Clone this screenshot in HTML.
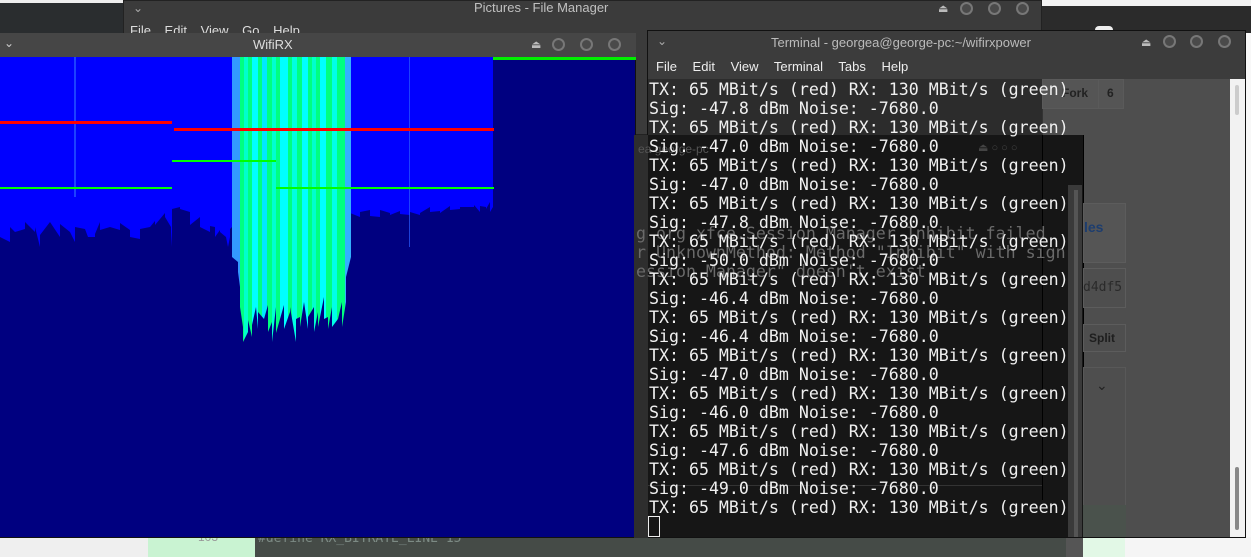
<!DOCTYPE html>
<html><head><meta charset="utf-8"><style>
*{margin:0;padding:0;box-sizing:border-box}
body{width:1251px;height:557px;overflow:hidden;position:relative;background:#f5f5f5;font-family:"Liberation Sans",sans-serif}
.a{position:absolute}
.mono{font-family:"DejaVu Sans Mono","Liberation Mono",monospace}
.btn{position:absolute;width:13px;height:13px;border-radius:50%;border:2px solid #777;background:#4a4a4a}
.ej{position:absolute;color:#bbb;font-size:11px}
</style></head><body>
<div class="a" style="left:0;top:0;width:123px;height:33px;background:#2a2d2f"></div>
<div class="a" style="left:0;top:0;width:123px;height:3px;background:#eee"></div>
<div class="a" style="left:1042px;top:0;width:209px;height:33px;background:#2b2b2b"></div>
<div class="a" style="left:1042px;top:0;width:209px;height:6px;background:#f2f2f2"></div>
<div class="a" style="left:1095px;top:26px;width:18px;height:8px;background:#eee;border-radius:4px 4px 0 0"></div>
<div class="a" style="left:123px;top:0;width:919px;height:135px;background:#3b3b3b;border:1px solid #222"></div>
<div class="a" style="left:133px;top:1px;color:#aaa;font-size:12px">⌄</div>
<div class="a" style="left:474px;top:0;color:#c0c0c0;font-size:13px">Pictures - File Manager</div>
<div class="a" style="left:130px;top:23px;color:#ddd;font-size:13px;word-spacing:10px">File Edit View Go Help</div>
<div class="ej" style="left:938px;top:2px">⏏</div>
<div class="btn" style="left:960px;top:2px"></div><div class="btn" style="left:988px;top:2px"></div><div class="btn" style="left:1016px;top:2px"></div>
<div class="a" style="left:0;top:537px;width:148px;height:20px;background:#efefef"></div>
<div class="a" style="left:148px;top:537px;width:107px;height:20px;background:#c9f3d2"></div>
<div class="a" style="left:198px;top:530px;color:#999;font-size:12px">103</div>
<div class="a" style="left:255px;top:537px;width:811px;height:20px;background:#454b47"></div>
<div class="a mono" style="left:258px;top:531px;color:#7c8a84;font-size:13px">#define RX_BITRATE_LINE 15</div>
<div class="a" style="left:1066px;top:537px;width:17px;height:20px;background:#555"></div>
<div class="a" style="left:1083px;top:537px;width:42px;height:20px;background:#e2f8e6"></div>
<div class="a" style="left:0;top:33px;width:636px;height:505px;background:#000080;border:1px solid #111"></div>
<div class="a" style="left:0;top:33px;width:636px;height:24px;background:#464646"></div>
<div class="a" style="left:4px;top:36px;color:#ccc;font-size:12px">⌄</div>
<div class="a" style="left:253px;top:37px;color:#ddd;font-size:13px">WifiRX</div>
<div class="ej" style="left:531px;top:38px">⏏</div>
<div class="btn" style="left:552px;top:38px"></div><div class="btn" style="left:580px;top:38px"></div><div class="btn" style="left:608px;top:38px"></div>
<svg class="a" style="left:0;top:57px" width="636" height="480">
<rect x="0" y="0" width="493" height="480" fill="#000080"/>
<path fill="#0000ff" d="M0 0H493V150L490 155V145L486 152V150L480 149V155L474 148V150L460 150V152L450 153V149L440 156V154L430 155V150L420 156V158L410 155V158L400 157V154L390 158V156L380 153V160L370 159V153L360 155V160L350 156V160L350 180L345 180V170L240 170V182L234 182V168L230 172V180L228 190L226 180L220 175V173L215 180V170L210 169V175L200 170V160L190 168V155L180 152V150L172 152V190L171 175V170L165 160V156L155 168V164L150 170V170L140 172V182L130 180V173L120 166V173L110 170L100 173V165L95 177V180L88 180L85 172L75 170V185L70 175L60 167V180L50 165L40 178V190L35 170V175L25 165V172L15 175L10 170V185L0 180Z"/>
<g>
<rect x="232" y="0" width="119" height="290" fill="#00ff80"/>
<rect x="232" y="0" width="8" height="290" fill="#3399ff"/>
<rect x="244" y="0" width="4" height="290" fill="#00ffcc"/>
<rect x="252" y="0" width="6" height="290" fill="#00ffff"/>
<rect x="262" y="0" width="5" height="290" fill="#00e8ff"/>
<rect x="272" y="0" width="4" height="290" fill="#00ffd0"/>
<rect x="280" y="0" width="8" height="290" fill="#00ffff"/>
<rect x="292" y="0" width="5" height="290" fill="#00ffe0"/>
<rect x="302" y="0" width="6" height="290" fill="#00ffff"/>
<rect x="312" y="0" width="4" height="290" fill="#00ffcc"/>
<rect x="320" y="0" width="6" height="290" fill="#00ffff"/>
<rect x="332" y="0" width="5" height="290" fill="#00ffe8"/>
<rect x="345" y="0" width="6" height="290" fill="#33b0ff"/>
<path fill="#000080" d="M232 200L238 205V215L240 230V250L243 270V285L248 275V263L252 280V268L256 250L258 272V255L264 262L268 248V275L272 265V285L276 250V276L280 262L284 248V272L290 255V250L296 285V262L300 260V270L304 245L308 272V260L314 250V275L318 255V270L324 240V262L328 260V272L332 250V270L338 262L342 245V270L346 245V220L351 200V480H232Z"/>
</g>
<rect x="74" y="0" width="2" height="140" fill="#2a5cff" opacity=".7"/>
<rect x="409" y="0" width="1" height="190" fill="#2a5cff" opacity=".7"/>
<rect x="0" y="64" width="172" height="3" fill="#ff0000"/>
<rect x="174" y="71" width="320" height="3" fill="#ff0000"/>
<rect x="172" y="103" width="104" height="2" fill="#00ff00"/>
<rect x="0" y="130" width="172" height="2" fill="#00ff00"/>
<rect x="276" y="130" width="218" height="2" fill="#00ff00"/>
<rect x="493" y="0" width="143" height="3" fill="#00ee00"/>
</svg>
<div class="a" style="left:1245px;top:33px;width:6px;height:504px;background:#f8f8f8"></div>
<div class="a" style="left:647px;top:30px;width:599px;height:508px;border:1px solid #111;background:#4e4e4e"></div>
<div class="a" style="left:648px;top:31px;width:597px;height:48px;background:#3c3c3c"></div>
<div class="a" style="left:657px;top:34px;color:#aaa;font-size:12px">⌄</div>
<div class="a" style="left:771px;top:35px;color:#bbb;font-size:13px">Terminal - georgea@george-pc:~/wifirxpower</div>
<div class="ej" style="left:1141px;top:36px">⏏</div>
<div class="btn" style="left:1163px;top:35px"></div><div class="btn" style="left:1190px;top:35px"></div><div class="btn" style="left:1218px;top:35px"></div>
<div class="a" style="left:656px;top:59px;color:#eee;font-size:13px;word-spacing:12px">File Edit View Terminal Tabs Help</div>
<div class="a" style="left:648px;top:79px;width:394px;height:56px;background:#2c2c2c"></div>
<div class="a" style="left:634px;top:135px;width:450px;height:402px;background:#161616;border-right:1px solid #000"></div>
<div class="a" style="left:634px;top:135px;width:14px;height:403px;background:#2e2e2e"></div>
<div class="a" style="left:1068px;top:185px;width:14px;height:352px;background:#3a3a3a"></div>
<div class="a" style="left:1074px;top:190px;width:4px;height:347px;background:#555"></div>
<div class="a" style="left:1042px;top:79px;width:1px;height:240px;background:#333"></div>
<div class="a" style="left:648px;top:485px;width:394px;height:1px;background:#333"></div>
<div class="a" style="left:1042px;top:135px;width:1px;height:365px;background:#000"></div>
<div class="a" style="left:1042px;top:79px;width:82px;height:30px;border:1px solid #5a5a5a;background:#555"></div>
<div class="a" style="left:1062px;top:86px;color:#222;font-size:12px;font-weight:bold">Fork</div>
<div class="a" style="left:1107px;top:86px;color:#222;font-size:12px;font-weight:bold">6</div>
<div class="a" style="left:1098px;top:80px;width:1px;height:29px;background:#5a5a5a"></div>
<div class="a" style="left:1083px;top:203px;width:43px;height:60px;background:#555;border:1px solid #5c5c5c"></div>
<div class="a" style="left:1084px;top:219px;color:#1d3d6e;font-size:14px;font-weight:bold">les</div>
<div class="a" style="left:1083px;top:268px;width:43px;height:40px;border:1px solid #5c5c5c"></div>
<div class="a mono" style="left:1083px;top:280px;color:#2a2a2a;font-size:13px">d4df5</div>
<div class="a" style="left:1083px;top:324px;width:43px;height:28px;border:1px solid #5c5c5c"></div>
<div class="a" style="left:1089px;top:331px;color:#1e1e1e;font-size:12px;font-weight:bold">Split</div>
<div class="a" style="left:1083px;top:367px;width:43px;height:148px;border:1px solid #585858"></div>
<div class="a" style="left:1096px;top:377px;color:#222;font-size:14px">⌄</div>
<div class="a" style="left:1083px;top:505px;width:43px;height:32px;background:#4a524c"></div>
<div class="a" style="left:1230px;top:79px;width:15px;height:458px;background:#f2f2f2"></div>
<div class="a" style="left:1235px;top:85px;width:4px;height:30px;background:#ccc;border-radius:2px"></div>
<div class="a" style="left:1235px;top:467px;width:4px;height:63px;background:#888;border-radius:2px"></div>
<div class="a" style="left:638px;top:142px;color:#555;font-size:12px">ea george-pc</div>
<div class="a" style="left:978px;top:141px;color:#444;font-size:11px">⏏ ○ ○ ○</div>
<div class="a mono" style="left:636px;top:224px;color:#6a6a6a;font-size:16.6px;line-height:19px;white-space:pre">g org.xfce.Session Manager Inhibit failed
r UnknownMethod: Method "Inhibit" with sign
ession Manager" doesn't exist</div>
<div class="a mono" style="left:649px;top:80px;color:#f0f0f0;font-size:16.6px;line-height:19px;white-space:pre">TX: 65 MBit/s (red) RX: 130 MBit/s (green)
Sig: -47.8 dBm Noise: -7680.0
TX: 65 MBit/s (red) RX: 130 MBit/s (green)
Sig: -47.0 dBm Noise: -7680.0
TX: 65 MBit/s (red) RX: 130 MBit/s (green)
Sig: -47.0 dBm Noise: -7680.0
TX: 65 MBit/s (red) RX: 130 MBit/s (green)
Sig: -47.8 dBm Noise: -7680.0
TX: 65 MBit/s (red) RX: 130 MBit/s (green)
Sig: -50.0 dBm Noise: -7680.0
TX: 65 MBit/s (red) RX: 130 MBit/s (green)
Sig: -46.4 dBm Noise: -7680.0
TX: 65 MBit/s (red) RX: 130 MBit/s (green)
Sig: -46.4 dBm Noise: -7680.0
TX: 65 MBit/s (red) RX: 130 MBit/s (green)
Sig: -47.0 dBm Noise: -7680.0
TX: 65 MBit/s (red) RX: 130 MBit/s (green)
Sig: -46.0 dBm Noise: -7680.0
TX: 65 MBit/s (red) RX: 130 MBit/s (green)
Sig: -47.6 dBm Noise: -7680.0
TX: 65 MBit/s (red) RX: 130 MBit/s (green)
Sig: -49.0 dBm Noise: -7680.0
TX: 65 MBit/s (red) RX: 130 MBit/s (green)</div>
<div class="a" style="left:648px;top:516px;width:12px;height:21px;border:1.5px solid #eee"></div>
</body></html>
